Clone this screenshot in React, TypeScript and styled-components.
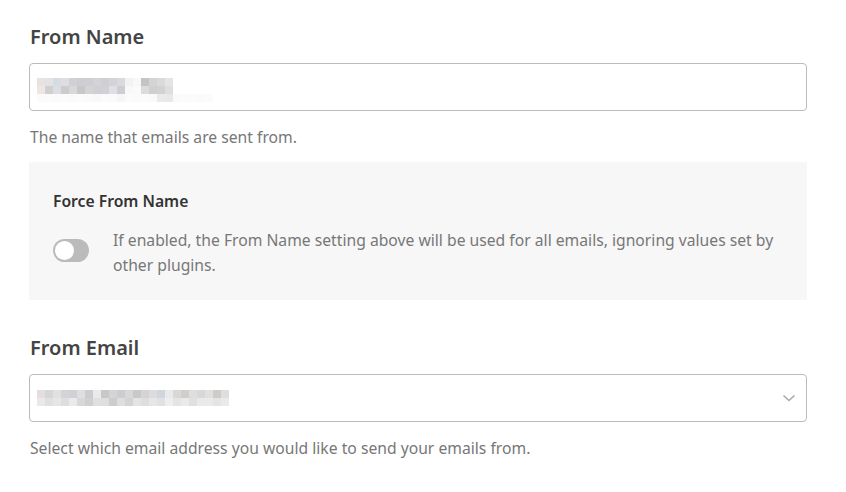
import React from "react";
import styled, { createGlobalStyle } from "styled-components";

const Global = createGlobalStyle`
  html, body { margin: 0; padding: 0; background: #ffffff; }
  body { font-family: "Segoe UI", "Noto Sans", "Open Sans", sans-serif; }
`;

const Page = styled.div`
  padding: 23px 39px 0 29px;
  display: flex;
  flex-direction: column;
`;

const Field = styled.section<{ $mt?: number }>`
  display: flex;
  flex-direction: column;
  margin-top: ${(p) => p.$mt ?? 0}px;
`;

const Heading = styled.h2`
  margin: 0 0 0 1px;
  font-size: 20px;
  line-height: 27px;
  font-weight: 600;
  color: #444444;
`;

const InputBox = styled.div`
  margin-top: 13px;
  height: 46px;
  border: 1px solid #bbbbbb;
  border-radius: 4px;
  display: flex;
  align-items: center;
  padding: 0 10px 0 7px;
  box-sizing: content-box;
`;

const Mosaic = styled.div<{ $rows: number }>`
  display: grid;
  grid-template-rows: repeat(${(p) => p.$rows}, 8px);
  margin-top: ${(p) => (p.$rows > 2 ? 5 : 0)}px;
`;

const MosaicRow = styled.div`
  display: flex;
`;

const Cell = styled.span<{ $c: string }>`
  width: 8px;
  height: 8px;
  background: ${(p) => p.$c};
`;

const Chevron = styled.svg`
  margin-left: auto;
`;

const Desc = styled.p`
  margin: 16px 0 0 1px;
  font-size: 15.7px;
  line-height: 20px;
  color: #777777;
`;

const Panel = styled.div`
  margin-top: 15px;
  background: #f7f7f7;
  padding: 29px 24px 22px 24px;
  display: flex;
  flex-direction: column;
`;

const PanelTitle = styled.h3`
  margin: 0;
  font-size: 15.7px;
  line-height: 20px;
  font-weight: 600;
  color: #333333;
`;

const ToggleRow = styled.div`
  margin-top: 17px;
  display: flex;
  align-items: flex-start;
  gap: 24px;
`;

const Toggle = styled.button`
  flex: none;
  margin-top: 11px;
  width: 36px;
  height: 23px;
  border-radius: 12px;
  border: none;
  background: #bbbbbb;
  padding: 2px;
  display: flex;
  align-items: center;
  cursor: pointer;
`;

const Knob = styled.span`
  width: 19px;
  height: 19px;
  border-radius: 50%;
  background: #ffffff;
`;

const ToggleText = styled.p`
  margin: 0;
  font-size: 15.7px;
  line-height: 25px;
  color: #777777;
`;

const nameCells = [
  ["#e8e2e2", "#e4e2e4", "#d6dce4", "#dedee2", "#d0d0d6", "#ccced6", "#d0ced0", "#d4d4d8", "#d0d0d0", "#d4d4d8", "#dadade", "#f2f2f2", "#f8f8f8", "#c6c2c8", "#d4d4d4", "#dadada", "#e4e4e4", "#ffffff", "#ffffff", "#ffffff"],
  ["#eee6e2", "#d0d0d0", "#dedee2", "#cccccf", "#d8d8d8", "#c8c8cb", "#d4d4d4", "#d0d0d3", "#d0d0d6", "#dee0e4", "#ceced2", "#f8f8f8", "#fafafa", "#dcdcdc", "#d0d0d0", "#d2d2d2", "#dedede", "#ffffff", "#ffffff", "#ffffff"],
  ["#fbfbfb", "#fbfbfb", "#fafafa", "#fbfbfb", "#fafafa", "#fbfbfb", "#fafafa", "#f8f8f8", "#fbfbfb", "#fafafa", "#f6f6f6", "#fbfbfb", "#fafafa", "#fbfbfb", "#fafafa", "#eceae8", "#e8e8e8", "#fafafa", "#fbfbfb", "#fbfbfb", "#fafafa", "#fbfbfb"],
];

const emailCells = [
  ["#e4dede", "#d6d6da", "#e0e0e0", "#d4d4d4", "#d0d0d6", "#dedede", "#ccccd0", "#eaeaea", "#c8c8cb", "#d4d4d4", "#ccccd2", "#d8d8d8", "#cac8ca", "#d4d4d4", "#dcdcdc", "#d0d6de", "#eaeaea", "#d8d8d8", "#d2ccca", "#dedede", "#d8d8d8", "#e0e0e0", "#d0cac8", "#dedede"],
  ["#ece8e8", "#e0e0e0", "#e6e6e6", "#dedee2", "#eaeaea", "#d8d8d8", "#d0d0d0", "#e0e0e0", "#dedede", "#cccccc", "#dedede", "#d4d4d8", "#e4e4e4", "#dedede", "#e6e6e6", "#e0e0e6", "#eeeeee", "#e4e4e4", "#eaeaea", "#e0e0e4", "#eaeaea", "#eaeaea", "#e4e4e6", "#eaeaea"],
];

function Blur({ cells }: { cells: string[][] }) {
  return (
    <Mosaic $rows={cells.length}>
      {cells.map((row, r) => (
        <MosaicRow key={r}>
          {row.map((c, i) => (
            <Cell key={i} $c={c} />
          ))}
        </MosaicRow>
      ))}
    </Mosaic>
  );
}

export default function App() {
  return (
    <>
      <Global />
      <Page>
        <Field>
          <Heading>From Name</Heading>
          <InputBox>
            <Blur cells={nameCells} />
          </InputBox>
          <Desc>The name that emails are sent from.</Desc>
        </Field>
        <Panel>
          <PanelTitle>Force From Name</PanelTitle>
          <ToggleRow>
            <Toggle aria-label="Force From Name">
              <Knob />
            </Toggle>
            <ToggleText>
              If enabled, the From Name setting above will be used for all emails, ignoring values set by
              other plugins.
            </ToggleText>
          </ToggleRow>
        </Panel>
        <Field $mt={34}>
          <Heading>From Email</Heading>
          <InputBox>
            <Blur cells={emailCells} />
            <Chevron width="14" height="8" viewBox="0 0 14 8" fill="none">
              <path d="M1.5 1.5 L7 6.5 L12.5 1.5" stroke="#aaaaaa" strokeWidth="1.6" />
            </Chevron>
          </InputBox>
          <Desc>Select which email address you would like to send your emails from.</Desc>
        </Field>
      </Page>
    </>
  );
}
